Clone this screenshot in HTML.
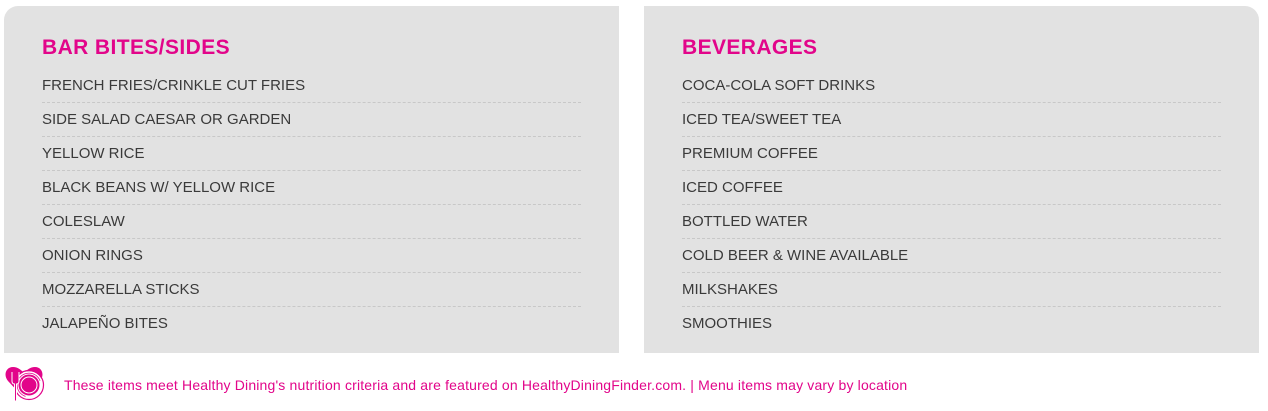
<!DOCTYPE html>
<html><head><meta charset="utf-8"><style>
body{margin:0;width:1268px;height:411px;background:#fff;font-family:"Liberation Sans",sans-serif;position:relative;overflow:hidden}
.p{position:absolute;top:6px;width:615px;height:347px;background:#e2e2e2}
.l{left:4px;border-top-left-radius:14px}
.r{left:644px;border-top-right-radius:14px}
h2{position:absolute;left:38px;top:30px;margin:0;font-size:21px;color:#e2058a;letter-spacing:0.4px;font-weight:bold}
ul{position:absolute;left:38px;top:63px;width:539px;margin:0;padding:0;list-style:none}
li{height:33px;line-height:33px;border-bottom:1px dashed #c8c8c8;font-size:15px;color:#3a3a3a;letter-spacing:0}
li:last-child{border-bottom:none}
.f{position:absolute;left:64px;top:377px;font-size:14px;color:#e2058a;letter-spacing:0.17px}
</style></head><body>
<div class="p l"><h2>BAR BITES/SIDES</h2><ul>
<li>FRENCH FRIES/CRINKLE CUT FRIES</li><li>SIDE SALAD CAESAR OR GARDEN</li><li>YELLOW RICE</li><li>BLACK BEANS W/ YELLOW RICE</li><li>COLESLAW</li><li>ONION RINGS</li><li>MOZZARELLA STICKS</li><li>JALAPEÑO BITES</li></ul></div>
<div class="p r"><h2>BEVERAGES</h2><ul>
<li>COCA-COLA SOFT DRINKS</li><li>ICED TEA/SWEET TEA</li><li>PREMIUM COFFEE</li><li>ICED COFFEE</li><li>BOTTLED WATER</li><li>COLD BEER &amp; WINE AVAILABLE</li><li>MILKSHAKES</li><li>SMOOTHIES</li></ul></div>
<svg style="position:absolute;left:0;top:362px" width="56" height="46" viewBox="0 0 56 46">
<path d="M24 36 L8 19 C3 13 6 5 13 5 C18 5 21 8 24 11 C27 8 30 5 35 5 C42 5 45 13 40 19 Z" fill="#e2058a"/>
<circle cx="29" cy="23" r="13" fill="none" stroke="#fff" stroke-width="1.5"/>
<circle cx="29" cy="23" r="11" fill="#e2058a" stroke="#fff" stroke-width="1"/>
<circle cx="29" cy="23" r="8" fill="none" stroke="#fff" stroke-width="1"/>
<circle cx="29" cy="23" r="14.5" fill="none" stroke="#e2058a" stroke-width="1.2"/>
<path d="M12 10 v9 q0 3 2.5 3 v17 h2 v-17 q2.5 0 2.5 -3 v-9" fill="#e2058a" stroke="#fff" stroke-width="1"/>
</svg>
<div class="f">These items meet Healthy Dining's nutrition criteria and are featured on HealthyDiningFinder.com. | Menu items may vary by location</div>
</body></html>
